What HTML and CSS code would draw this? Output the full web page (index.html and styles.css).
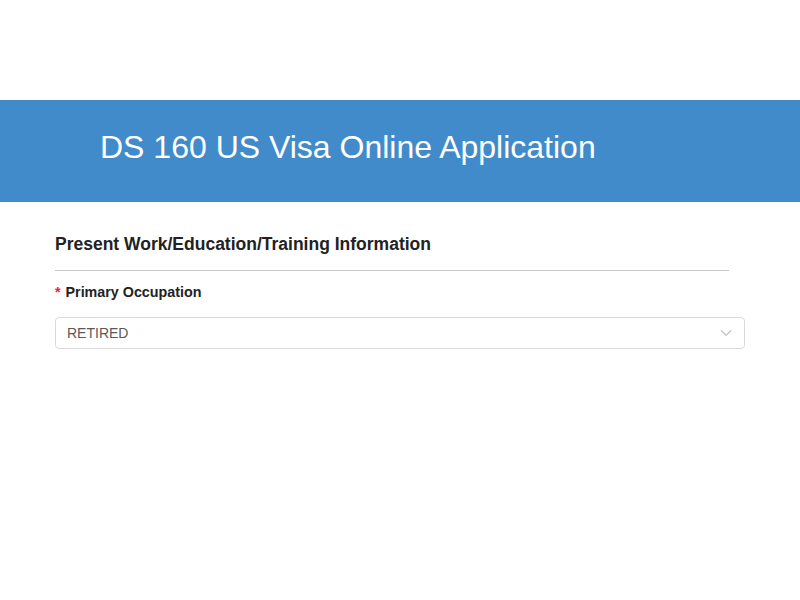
FILE: index.html
```html
<!DOCTYPE html>
<html>
<head>
<meta charset="utf-8">
<link rel="stylesheet" href="styles.css">
</head>
<body>
<div class="top-space"></div>
<header class="banner">
  <h1 class="banner-title">DS 160 US Visa Online Application</h1>
</header>
<main class="content">
  <section class="section">
    <h2 class="section-title">Present Work/Education/Training Information</h2>
    <div class="divider"></div>
    <div class="field">
      <label class="field-label"><span class="req">*</span> Primary Occupation</label>
      <div class="select">
        <span class="select-value">RETIRED</span>
        <svg class="select-arrow" width="12" height="8" viewBox="0 0 12 8"><path d="M1 1.5 L6 6.5 L11 1.5" fill="none" stroke="#bfbfbf" stroke-width="1.1"/></svg>
      </div>
    </div>
  </section>
</main>
</body>
</html>
```
FILE: styles.css
```css
html, body {
  margin: 0;
  padding: 0;
  background: #fff;
  font-family: "Liberation Sans", Arial, Helvetica, sans-serif;
}
.top-space {
  height: 100px;
}
.banner {
  background: #428bca;
  height: 102px;
  display: flex;
  align-items: center;
  padding-left: 100px;
  box-sizing: border-box;
}
.banner-title {
  margin: 0;
  color: #fff;
  font-weight: normal;
  font-size: 32px;
  line-height: 1;
  padding-bottom: 8px;
}
.content {
  padding: 0 55px;
}
.section {
  padding-top: 32px;
}
.section-title {
  margin: 0;
  font-size: 17.5px;
  font-weight: bold;
  color: #222;
  line-height: 20px;
}
.divider {
  width: 674px;
  height: 1px;
  background: #c8c8c8;
  margin-top: 16px;
}
.field {
  padding-top: 13px;
}
.field-label {
  display: block;
  font-size: 14.3px;
  font-weight: bold;
  color: #222;
  line-height: 16px;
}
.req {
  color: #f5222d;
  margin-right: 1px;
}
.select {
  margin-top: 17px;
  width: 690px;
  height: 32px;
  box-sizing: border-box;
  border: 1px solid #d9d9d9;
  border-radius: 4px;
  display: flex;
  align-items: center;
  justify-content: space-between;
  padding: 0 12px 0 11px;
}
.select-value {
  font-size: 14px;
  color: #595959;
}
.select-arrow {
  display: block;
}
```
